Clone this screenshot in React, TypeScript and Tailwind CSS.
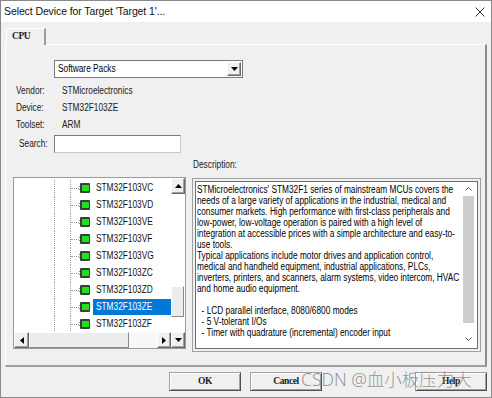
import React from "react";

const items = [
  "STM32F103VC",
  "STM32F103VD",
  "STM32F103VE",
  "STM32F103VF",
  "STM32F103VG",
  "STM32F103ZC",
  "STM32F103ZD",
  "STM32F103ZE",
  "STM32F103ZF",
];

const desc = [
  "STMicroelectronics' STM32F1 series of mainstream MCUs covers the",
  "needs of a large variety of applications in the industrial, medical and",
  "consumer markets. High performance with first-class peripherals and",
  "low-power, low-voltage operation is paired with a high level of",
  "integration at accessible prices with a simple architecture and easy-to-",
  "use tools.",
  "Typical applications include motor drives and application control,",
  "medical and handheld equipment, industrial applications, PLCs,",
  "inverters, printers, and scanners, alarm systems, video intercom, HVAC",
  "and home audio equipment.",
  " ",
  "  - LCD parallel interface, 8080/6800 modes",
  "  - 5 V-tolerant I/Os",
  "  - Timer with quadrature (incremental) encoder input",
];

function Chip() {
  return (
    <svg width="11" height="10" viewBox="0 0 11 10">
      <rect x="1" y="0" width="10" height="10" rx="1" fill="#3c3c3c" />
      <rect x="0" y="3" width="1" height="1" fill="#888" />
      <rect x="0" y="6" width="1" height="1" fill="#888" />
      <rect x="3" y="2" width="7" height="6" fill="#1fe01f" />
    </svg>
  );
}

function Tri({ dir }: { dir: "up" | "down" | "left" | "right" }) {
  const pts =
    dir === "up"
      ? "0,4 3.5,0 7,4"
      : dir === "down"
      ? "0,0 7,0 3.5,4"
      : dir === "left"
      ? "4,0 4,7 0,3.5"
      : "0,0 0,7 4,3.5";
  const w = dir === "up" || dir === "down" ? 7 : 4;
  const h = dir === "up" || dir === "down" ? 4 : 7;
  return (
    <svg width={w} height={h} viewBox={`0 0 ${w} ${h}`}>
      <polygon points={pts} fill="#000" />
    </svg>
  );
}

function ClassicBtn({ dir, cls }: { dir: "up" | "down" | "left" | "right"; cls: string }) {
  return (
    <div
      className={`${cls} bg-[#f0f0f0] border border-t-white border-l-white border-r-[#696969] border-b-[#696969] shadow-[inset_-1px_-1px_0_#a0a0a0] flex items-center justify-center`}
    >
      <Tri dir={dir} />
    </div>
  );
}

function N({ children }: { children: React.ReactNode }) {
  return <span className="inline-block origin-left scale-x-[0.83] whitespace-pre">{children}</span>;
}

export default function App() {
  return (
    <div className="w-[492px] h-[398px] bg-[#f0f0f0] border border-[#8a8a8a] relative overflow-hidden font-['Liberation_Sans',sans-serif] text-black">
      {/* title bar */}
      <div className="h-[21px] bg-white flex items-center justify-between pl-[3px] pr-[6px]">
        <span className="text-[10.5px] leading-none text-[#111] tracking-[-0.1px]">
          Select Device for Target 'Target 1'...
        </span>
        <svg width="10" height="10" viewBox="0 0 10 10">
          <path d="M0.5 0.5 L9.5 9.5 M9.5 0.5 L0.5 9.5" stroke="#333" strokeWidth="1" />
        </svg>
      </div>

      {/* tab + panel */}
      <div className="pl-[4px] pt-[6px]">
        <div className="relative z-10 ml-[1px] -mb-[1px] w-[40px] h-[17px] bg-[#f0f0f0] border-t border-l border-t-white border-l-white border-r-2 border-r-[#9a9a9a] flex items-center pl-[5px]">
          <span className="font-['Liberation_Serif',serif] text-[9.5px] font-bold leading-none tracking-[-0.4px] text-[#222]">
            CPU
          </span>
        </div>
        <div className="w-[482px] h-[323px] border-t border-l border-t-white border-l-white border-r-2 border-b-2 border-r-[#8c8c8c] border-b-[#a0a0a0] flex flex-col">
          {/* dropdown */}
          <div className="ml-[48px] mt-[15px] w-[189px] h-[18px] bg-white border border-[#7a7a7a] flex items-center justify-between pl-[3px] pr-[1px]">
            <span className="text-[10px] leading-none">
              <N>Software Packs</N>
            </span>
            <ClassicBtn dir="down" cls="w-[14px] h-[14px]" />
          </div>

          {/* info rows */}
          <div className="mt-[4.5px] pl-[10px] flex flex-col text-[10px] leading-none text-[#1a1a1a]">
            {[
              ["Vendor:", "STMicroelectronics"],
              ["Device:", "STM32F103ZE"],
              ["Toolset:", "ARM"],
            ].map(([l, v]) => (
              <div key={l} className="h-[17px] flex items-center">
                <span className="w-[46px]">
                  <N>{l}</N>
                </span>
                <span>
                  <N>{v}</N>
                </span>
              </div>
            ))}
          </div>

          {/* search */}
          <div className="mt-[1.5px] pl-[13px] flex items-center text-[10px] leading-none text-[#1a1a1a]">
            <span className="w-[35px]">
              <N>Search:</N>
            </span>
            <div className="w-[127px] h-[18px] bg-white border border-[#7a7a7a] border-b-[#c8c8c8] border-r-[#c8c8c8]" />
          </div>

          {/* description label */}
          <div className="mt-[6px] h-[12px] pl-[187px] flex items-center text-[10px] leading-none text-[#1a1a1a]">
            <N>Description:</N>
          </div>

          {/* boxes */}
          <div className="mt-[6px] flex items-start">
            {/* tree */}
            <div className="ml-[7px] w-[173px] h-[172px] border border-[#9a9a9a] bg-white flex flex-col">
              <div className="flex-1 flex min-h-0">
                <div className="flex-1 overflow-hidden pt-[1.5px]">
                  {items.map((it) => {
                    const sel = it === "STM32F103ZE";
                    return (
                      <div key={it} className="h-[17px] flex items-stretch">
                        <div className="w-[40px] shrink-0" />
                        <div className="w-[16px] shrink-0 border-l border-dotted border-[#a0a0a0]" />
                        <div className="w-[9px] shrink-0 border-l border-dotted border-[#a0a0a0] flex items-center">
                          <div className="w-full border-t border-dotted border-[#a0a0a0]" />
                        </div>
                        <div className="shrink-0 flex items-center">
                          <Chip />
                        </div>
                        <div
                          className={`ml-[3px] flex-1 my-[0.5px] flex items-center pl-[3px] text-[10px] leading-none whitespace-nowrap ${
                            sel ? "bg-[#0078d7] text-white" : "text-[#111]"
                          }`}
                        >
                          <N>{it}</N>
                        </div>
                      </div>
                    );
                  })}
                </div>
                {/* vertical scrollbar */}
                <div className="w-[14px] flex flex-col bg-white">
                  <ClassicBtn dir="up" cls="w-[14px] h-[16px]" />
                  <div className="h-[92px]" />
                  <div className="w-[13px] h-[31px] bg-[#ececec] border border-t-white border-l-white border-r-[#8a8a8a] border-b-[#8a8a8a]" />
                </div>
              </div>
              {/* horizontal scrollbar row */}
              <div className="h-[16px] flex bg-[#f7f7f7]">
                <ClassicBtn dir="left" cls="w-[15px] h-[16px]" />
                <div className="w-[100px] h-[16px] bg-[#ececec] border border-t-white border-l-white border-r-[#8a8a8a] border-b-[#8a8a8a]" />
                <div className="flex-1" />
                <ClassicBtn dir="right" cls="w-[14px] h-[16px]" />
                <ClassicBtn dir="down" cls="w-[14px] h-[16px]" />
              </div>
            </div>

            {/* description */}
            <div className="ml-[6px] mt-[1px] w-[289px] h-[174px] border border-[#a0a0a0] p-[2px] flex">
              <div className="flex-1 border border-[#6e6e6e] bg-white flex min-w-0">
                <div className="flex-1 min-w-0 pl-[1px] pt-[1.5px] text-[10px] leading-[11px] text-black overflow-hidden">
                  <div className="w-max origin-top-left scale-x-[0.83]">
                    {desc.map((d, i) => (
                      <div key={i} className="h-[11px] whitespace-pre">
                        {d}
                      </div>
                    ))}
                  </div>
                </div>
                <div className="w-[16px] shrink-0 flex flex-col items-start pl-[2px]">
                  <div className="h-[14px] w-[11px] flex items-center justify-center">
                    <svg width="7" height="4" viewBox="0 0 7 4">
                      <path d="M0.5 3.5 L3.5 0.5 L6.5 3.5" stroke="#606060" fill="none" strokeWidth="1" />
                    </svg>
                  </div>
                  <div className="w-[11px] h-[127px] bg-[#cdcdcd]" />
                  <div className="flex-1 w-[11px] flex items-end justify-center pb-[7px]">
                    <svg width="7" height="4" viewBox="0 0 7 4">
                      <path d="M0.5 0.5 L3.5 3.5 L6.5 0.5" stroke="#606060" fill="none" strokeWidth="1" />
                    </svg>
                  </div>
                </div>
              </div>
            </div>
          </div>
        </div>
      </div>

      {/* buttons */}
      <div className="mt-[5px] flex">
        {[
          ["OK", "ml-[168px]"],
          ["Cancel", "ml-[9px]"],
          ["Help", "ml-[93px]"],
        ].map(([t, m]) => (
          <div
            key={t}
            className={`${m} w-[72px] h-[19px] bg-[#f0f0f0] border border-[#a0a0a0] border-r-[#505050] border-b-[#505050] shadow-[inset_1px_1px_0_#fff,inset_-1px_-1px_0_#a0a0a0] flex items-center justify-center font-['Liberation_Serif',serif] text-[9.5px] font-bold tracking-[-0.4px] text-[#222]`}
          >
            {t}
          </div>
        ))}
      </div>

      {/* watermark */}
      <div className="absolute left-[300px] top-[370px] text-[17.5px] leading-none text-[#8a8a8a]/90 font-['Noto_Sans','Noto_Sans_CJK_SC',sans-serif] font-light whitespace-nowrap">
        CSDN @血小板压力大
      </div>
    </div>
  );
}
